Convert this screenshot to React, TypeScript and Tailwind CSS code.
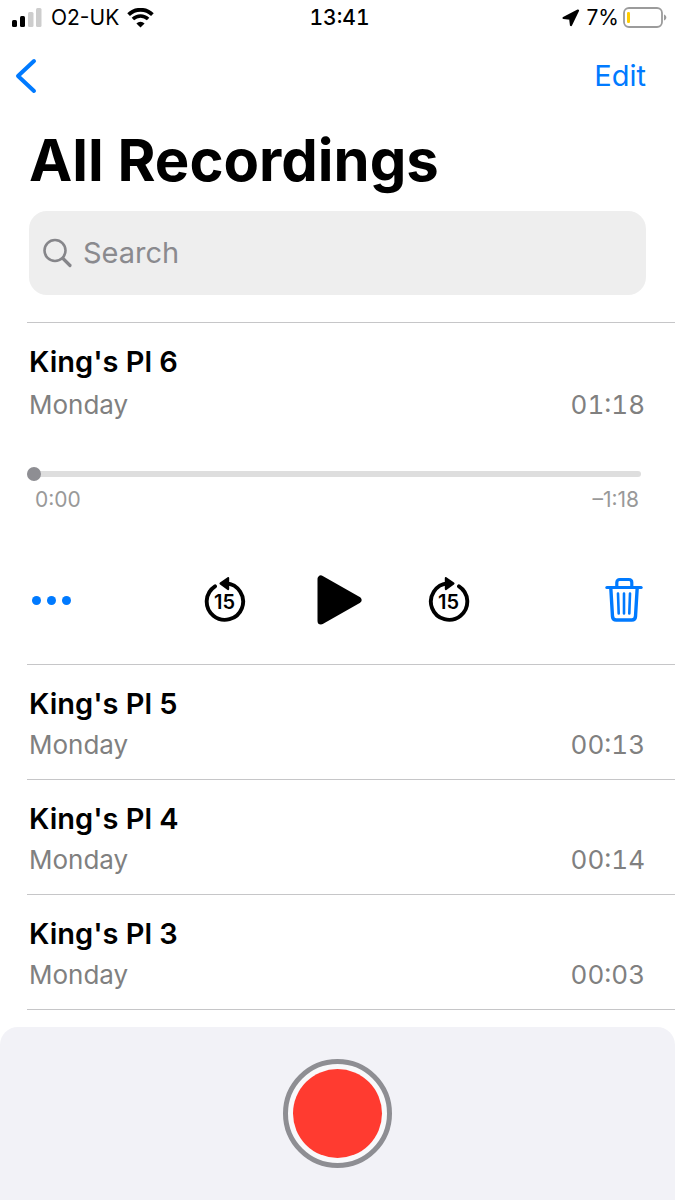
import { useState } from 'react';

type Recording = { id: number; name: string; day: string; length: string };

const recordings: Recording[] = [
  { id: 6, name: "King's Pl 6", day: 'Monday', length: '01:18' },
  { id: 5, name: "King's Pl 5", day: 'Monday', length: '00:13' },
  { id: 4, name: "King's Pl 4", day: 'Monday', length: '00:14' },
  { id: 3, name: "King's Pl 3", day: 'Monday', length: '00:03' }
];

function SignalIcon() {
  return (
    <svg width="31" height="20" viewBox="0 0 31 20" aria-hidden="true">
      <rect x="0" y="12" width="5" height="7" rx="1.5" fill="#000" />
      <rect x="8" y="8" width="5" height="11" rx="1.5" fill="#000" />
      <rect x="16" y="4" width="5.5" height="15" rx="1.5" fill="#cdcdcd" />
      <rect x="24" y="0" width="5.5" height="19" rx="1.5" fill="#cdcdcd" />
    </svg>
  );
}

function WifiIcon() {
  return (
    <svg width="27" height="20" viewBox="0 0 27 20" fill="none" stroke="#000" aria-hidden="true">
      <path d="M1.6 6.6a17 17 0 0 1 23.8 0" strokeWidth="3.8" />
      <path d="M5.9 11.1a10.9 10.9 0 0 1 15.2 0" strokeWidth="3.5" />
      <path d="M13.5 19.4 9.4 15.4a5.9 5.9 0 0 1 8.2 0Z" fill="#000" stroke="none" />
    </svg>
  );
}

function LocationIcon() {
  return (
    <svg width="18" height="18" viewBox="0 0 18 18" aria-hidden="true">
      <path d="M16 1.600 9 16 8.200 9.600 1.600 9Z" fill="#000" stroke="#000" strokeWidth="2.200" strokeLinejoin="round" />
    </svg>
  );
}

function BatteryIcon() {
  return (
    <svg width="44" height="22" viewBox="0 0 44 22" aria-hidden="true">
      <rect x="1" y="1" width="38" height="19" rx="5" fill="#fff" stroke="#9b9b9b" strokeWidth="1.8" />
      <rect x="4" y="5" width="3" height="11" rx="1.2" fill="#fc0" />
      <path d="M41 7.5c1.5.5 2.3 1.6 2.3 3s-.8 2.500-2.300 3Z" fill="#9b9b9b" />
    </svg>
  );
}

function SkipIcon({ forward = false }: { forward?: boolean }) {
  return (
    <svg width="42" height="46" viewBox="0 0 42 46" aria-hidden="true">
      <g transform={forward ? 'translate(42 0) scale(-1 1)' : undefined}>
        <path d="M11 9.300A18.200 18.200 0 1 0 22 6.400" fill="none" stroke="#000" strokeWidth="3.900" strokeLinecap="round" />
        <path d="M16 5.600 23.600.3c.8-.5 1.600-.1 1.600.8v11c0 1-.8 1.300-1.600.8L16 7.400c-.7-.5-.7-1.300 0-1.800Z" fill="#000" />
      </g>
      <text x="20.500" y="32" textAnchor="middle" className="text-[20px] font-semibold">
        15
      </text>
    </svg>
  );
}

function TrashIcon() {
  return (
    <svg width="38" height="46" viewBox="0 0 38 46" fill="none" stroke="#007aff" strokeLinecap="round" strokeLinejoin="round" aria-hidden="true">
      <path d="M1.8 10.5h34.400" strokeWidth="3" />
      <path d="M11.800 10V5.500c0-1.800 1.200-3 3-3h9c1.800 0 3 1.200 3 3V10" strokeWidth="3.200" />
      <path d="m5.800 11 1.700 28.500c.2 2.200 1.500 3.500 3.700 3.500h15.600c2.200 0 3.500-1.300 3.700-3.500L32.200 11" strokeWidth="3.400" />
      <path d="m13 16.500.7 20M19 16.500v20M25 16.500l-.7 20" strokeWidth="2.600" />
    </svg>
  );
}

function StatusBar() {
  return (
    <div className="grid h-9 grid-cols-3 items-center pr-2 pl-3 text-[21px] leading-6">
      <div className="flex items-center gap-2">
        <SignalIcon />
        <span className="whitespace-nowrap">O2-UK</span>
        <WifiIcon />
      </div>
      <time className="text-center font-medium tabular-nums">13:41</time>
      <div className="flex items-center justify-end">
        <LocationIcon />
        <span className="mr-1 ml-1.5">7%</span>
        <BatteryIcon />
      </div>
    </div>
  );
}

function Player() {
  const [position, setPosition] = useState(0);

  return (
    <div className="pt-[46px]">
      <input
        type="range"
        aria-label="Position"
        min={0}
        max={78}
        value={position}
        onChange={(e) => setPosition(Number(e.target.value))}
        className="-ml-0.5 block h-3.5 w-[calc(100%-2px)] appearance-none bg-transparent [&::-webkit-slider-runnable-track]:h-1.5 [&::-webkit-slider-runnable-track]:rounded-full [&::-webkit-slider-runnable-track]:bg-[#dedede] [&::-webkit-slider-thumb]:-mt-1 [&::-webkit-slider-thumb]:size-3.5 [&::-webkit-slider-thumb]:appearance-none [&::-webkit-slider-thumb]:rounded-full [&::-webkit-slider-thumb]:bg-[#8e8e93]"
      />
      <div className="mt-[5px] flex justify-between px-1.5 text-[21px] leading-7 text-[#999]">
        <span>0:00</span>
        <span>–1:18</span>
      </div>
      <div className="mt-[60px] flex items-center justify-between">
        <button type="button" aria-label="More" className="flex w-11 gap-1.5 pl-[3px]">
          <span className="size-[9px] rounded-full bg-[#007aff]" />
          <span className="size-[9px] rounded-full bg-[#007aff]" />
          <span className="size-[9px] rounded-full bg-[#007aff]" />
        </button>
        <div className="flex items-center gap-[66px]">
          <button type="button" aria-label="Back 15 seconds">
            <SkipIcon />
          </button>
          <button type="button" aria-label="Play">
            <svg width="50" height="52" viewBox="0 0 50 52" aria-hidden="true">
              <path d="M9 5v42L46 26Z" fill="#000" stroke="#000" strokeWidth="7" strokeLinejoin="round" />
            </svg>
          </button>
          <button type="button" aria-label="Forward 15 seconds">
            <SkipIcon forward />
          </button>
        </div>
        <button type="button" aria-label="Delete" className="flex w-11 justify-end pr-0.5">
          <TrashIcon />
        </button>
      </div>
    </div>
  );
}

function RecordingRow({ item, open = false }: { item: Recording; open?: boolean }) {
  return (
    <li className={`border-t border-[#c6c6c8] pt-5 pr-[30px] pl-0.5 ${open ? 'pb-[38px]' : 'pb-[18px]'}`}>
      <h2 className="text-[29px] leading-[38px] font-semibold">{item.name}</h2>
      <div className={`flex justify-between text-[26px] leading-8 text-[#808080] ${open ? 'mt-2' : 'mt-1.5'}`}>
        <span>{item.day}</span>
        <span className="tabular-nums">{item.length}</span>
      </div>
      {open && <Player />}
    </li>
  );
}

export default function App() {
  const [query, setQuery] = useState('');

  return (
    <div className="flex min-h-screen flex-col bg-white font-['Inter','Liberation_Sans',sans-serif] text-black">
      <StatusBar />

      <header className="px-[29px]">
        <nav className="flex h-20 items-center justify-between text-[29px] text-[#007aff]">
          <a href="#" aria-label="Back" className="-ml-3.5">
            <svg width="22" height="36" viewBox="0 0 22 36" fill="none" stroke="#007aff" strokeWidth="4" strokeLinecap="round" strokeLinejoin="round" aria-hidden="true">
              <path d="M19 3 3 18l16 15" />
            </svg>
          </a>
          <button type="button">Edit</button>
        </nav>
        <h1 className="mt-2 text-[58px] leading-[72px] font-bold">All Recordings</h1>
        <label className="mt-[15px] flex h-21 items-center gap-2.5 rounded-[18px] bg-[#eee] px-3.5">
          <svg width="30" height="30" viewBox="0 0 30 30" fill="none" stroke="#86868a" strokeLinecap="round" aria-hidden="true">
            <circle cx="12" cy="12.500" r="10.500" strokeWidth="2.600" />
            <path d="m20 20.500 7 7" strokeWidth="3.200" />
          </svg>
          <input
            type="text"
            aria-label="Search"
            placeholder="Search"
            value={query}
            onChange={(e) => setQuery(e.target.value)}
            className="min-w-0 flex-1 bg-transparent text-[29px] leading-9 outline-none placeholder:text-[#8a8a8e]"
          />
        </label>
      </header>

      <main className="mt-[27px] ml-[27px] flex-1">
        <ul className="border-b border-[#c6c6c8]">
          {recordings.map((item, i) => (
            <RecordingRow key={item.id} item={item} open={i === 0} />
          ))}
        </ul>
      </main>

      <footer className="sticky bottom-0 mt-4 flex justify-center rounded-t-[18px] bg-[#f2f2f7] pt-8 pb-8">
        <button type="button" aria-label="Record" className="size-[109px] rounded-full border-[5px] border-[#8e8e93] bg-[#f9f9fb] p-[5px]">
          <span className="block size-full rounded-full bg-[#ff3b30]" />
        </button>
      </footer>
    </div>
  );
}
